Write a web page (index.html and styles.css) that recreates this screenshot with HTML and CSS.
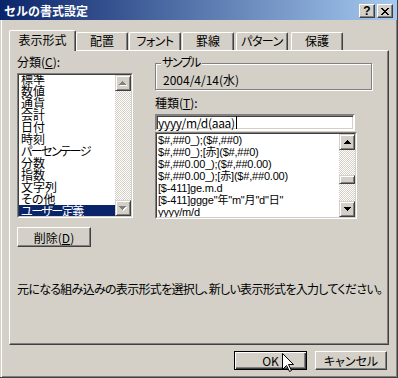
FILE: index.html
```html
<!DOCTYPE html>
<html lang="ja">
<head>
    <meta charset="UTF-8">
    <title>セルの書式設定</title>
    <link rel="stylesheet" href="styles.css">
</head>
<body>
    <div class="window">
        <div class="titlebar">
            <span class="title">セルの書式設定</span>
            <div class="caption-buttons">
                <span class="cap-btn help">?</span>
                <span class="cap-btn close">
                    <svg width="8" height="7" viewBox="0 0 8 7"><path d="M0 0h2v1H0zM6 0h2v1H6zM1 1h2v1H1zM5 1h2v1H5zM2 2h4v1H2zM3 3h2v1H3zM2 4h4v1H2zM1 5h2v1H1zM5 5h2v1H5zM0 6h2v1H0zM6 6h2v1H6z" fill="#000"/></svg>
                </span>
            </div>
        </div>

        <div class="client">
            <div class="tabs">
                <div class="tab active">表示形式</div>
                <div class="tab t-align">配置</div>
                <div class="tab t-font narrow">フォント</div>
                <div class="tab t-border">罫線</div>
                <div class="tab t-pattern narrow">パターン</div>
                <div class="tab t-protect">保護</div>
            </div>

            <div class="panel">
                <div class="columns">
                    <div class="col-left">
                        <div class="field-label">分類(<u>C</u>):</div>
                        <div class="listbox category-list">
                            <div class="listbox-inner">
                                <div class="list-items">
                                    <div class="item">標準</div>
                                    <div class="item">数値</div>
                                    <div class="item">通貨</div>
                                    <div class="item">会計</div>
                                    <div class="item">日付</div>
                                    <div class="item">時刻</div>
                                    <div class="item narrow">パーセンテージ</div>
                                    <div class="item">分数</div>
                                    <div class="item">指数</div>
                                    <div class="item">文字列</div>
                                    <div class="item">その他</div>
                                    <div class="item selected narrow">ユーザー定義</div>
                                </div>
                                <div class="scrollbar">
                                    <div class="scroll-btn">
                                        <svg width="8" height="5" viewBox="0 0 8 5"><path d="M4 1h1v1H4zM3 2h3v1H3zM2 3h5v1H2zM1 4h7v1H1z" fill="#fff"/><path d="M3 0h1v1H3zM2 1h3v1H2zM1 2h5v1H1zM0 3h7v1H0z" fill="#808080"/></svg>
                                    </div>
                                    <div class="scroll-track"></div>
                                    <div class="scroll-btn">
                                        <svg width="8" height="5" viewBox="0 0 8 5"><path d="M1 1h7v1H1zM2 2h5v1H2zM3 3h3v1H3zM4 4h1v1H4z" fill="#fff"/><path d="M0 0h7v1H0zM1 1h5v1H1zM2 2h3v1H2zM3 3h1v1H3z" fill="#808080"/></svg>
                                    </div>
                                </div>
                            </div>
                        </div>
                        <button class="btn delete">削除(<u>D</u>)</button>
                    </div>

                    <div class="col-right">
                        <div class="group">
                            <span class="group-label narrow">サンプル</span>
                            <div class="sample-value">2004/4/14(水)</div>
                        </div>
                        <div class="field-label">種類(<u>T</u>):</div>
                        <div class="textbox">yyyy/m/d(aaa)<span class="caret"></span></div>
                        <div class="listbox format-list">
                            <div class="listbox-inner">
                                <div class="list-items">
                                    <div class="item">$#,##0_);($#,##0)</div>
                                    <div class="item">$#,##0_);[赤]($#,##0)</div>
                                    <div class="item">$#,##0.00_);($#,##0.00)</div>
                                    <div class="item">$#,##0.00_);[赤]($#,##0.00)</div>
                                    <div class="item">[$-411]ge.m.d</div>
                                    <div class="item">[$-411]ggge"年"m"月"d"日"</div>
                                    <div class="item">yyyy/m/d</div>
                                </div>
                                <div class="scrollbar">
                                    <div class="scroll-btn">
                                        <svg width="7" height="4" viewBox="0 0 7 4"><path d="M3 0h1v1H3zM2 1h3v1H2zM1 2h5v1H1zM0 3h7v1H0z" fill="#000"/></svg>
                                    </div>
                                    <div class="scroll-track">
                                        <div class="thumb"></div>
                                    </div>
                                    <div class="scroll-btn">
                                        <svg width="7" height="4" viewBox="0 0 7 4"><path d="M0 0h7v1H0zM1 1h5v1H1zM2 2h3v1H2zM3 3h1v1H3z" fill="#000"/></svg>
                                    </div>
                                </div>
                            </div>
                        </div>
                    </div>
                </div>

                <p class="hint">元になる組み込みの表示形式を選択し、新しい表示形式を入力してください。</p>
            </div>

            <div class="actions">
                <button class="btn ok default">OK</button>
                <button class="btn cancel">キャンセル</button>
            </div>
        </div>

        <!-- mouse pointer resting on the OK button -->
        <svg class="cursor" width="13" height="20" viewBox="0 0 13 20">
            <path d="M0.5 0.5V16.5L4.5 12.5L7.5 18.5L9.5 17.5L6.5 11.5H11.5Z" fill="#fff" stroke="#000" stroke-width="1" stroke-linejoin="miter"/>
        </svg>
    </div>
</body>
</html>
```

FILE: styles.css
```css
* {
    margin: 0;
    padding: 0;
    box-sizing: border-box;
}

body {
    width: 398px;
    height: 378px;
    overflow: hidden;
    background: #d4d0c8;
    font-family: "Noto Sans CJK JP", sans-serif;
    font-size: 12px;
    font-feature-settings: "palt";
    color: #000;
}

u {
    text-decoration: underline;
    text-underline-offset: 1px;
}

.narrow {
    letter-spacing: -1.5px;
}

.window {
    position: relative;
    width: 398px;
    height: 378px;
    background: #d4d0c8;
    border-right: 1px solid #404040;
    border-bottom: 1px solid #404040;
    box-shadow: inset 1px 1px #d4d0c8, inset 2px 2px #fff, inset -1px -1px #808080;
    overflow: hidden;
}

/* title bar */
.titlebar {
    display: flex;
    justify-content: space-between;
    align-items: flex-start;
    height: 20px;
    padding: 0 4px 0 4px;
    background: linear-gradient(to right, #0a246a, #a6caf0);
}

.title {
    color: #fff;
    font-weight: bold;
    font-feature-settings: normal;
    line-height: 16px;
    padding-top: 3px;
}

.caption-buttons {
    display: flex;
    gap: 2px;
    padding-top: 4px;
}

.cap-btn {
    display: flex;
    align-items: center;
    justify-content: center;
    width: 16px;
    height: 14px;
    background: #d4d0c8;
    border: 1px solid;
    border-color: #fff #404040 #404040 #fff;
    box-shadow: inset -1px -1px #808080;
}

.cap-btn.help {
    font-family: "Liberation Sans", sans-serif;
    font-weight: bold;
    font-size: 12px;
    line-height: 12px;
}

/* tabs */
.client {
    padding: 10px 8px 0 9px;
}

.tabs {
    display: flex;
    align-items: flex-end;
    height: 20px;
}

.tab {
    height: 18px;
    width: 52px;
    border-top: 1px solid #fff;
    border-left: 1px solid #fff;
    border-right: 1px solid #404040;
    border-radius: 2px 2px 0 0;
    box-shadow: inset -1px 0 #808080;
    text-align: center;
    line-height: 16px;
    white-space: nowrap;
}

.tab.narrow {
    letter-spacing: -0.5px;
}

.tab.active {
    position: relative;
    z-index: 1;
    width: 67px;
    height: 21px;
    margin-bottom: -1px;
    background: #d4d0c8;
    line-height: 18px;
}

.t-font,
.t-border {
    margin-left: 1px;
}

.t-pattern {
    margin-left: 2px;
}

.t-protect {
    margin-left: 3px;
}

.panel {
    width: 380px;
    height: 295px;
    padding: 4px 0 0 7px;
    border-top: 1px solid #fff;
    border-left: 1px solid #fff;
    border-right: 1px solid #404040;
    border-bottom: 1px solid #404040;
    box-shadow: inset -1px -1px #808080;
}

.columns {
    display: flex;
    gap: 22px;
}

.col-left {
    width: 116px;
}

.col-right {
    width: 217px;
}

.field-label {
    height: 18px;
    line-height: 14px;
}

/* list boxes */
.listbox {
    border: 1px solid;
    border-color: #808080 #fff #fff #808080;
}

.listbox-inner {
    display: flex;
    height: 100%;
    border: 1px solid;
    border-color: #404040 #d4d0c8 #d4d0c8 #404040;
    background: #fff;
    overflow: hidden;
}

.list-items {
    flex: 1;
    overflow: hidden;
}

.item {
    height: 12px;
    line-height: 12px;
    white-space: nowrap;
}

.category-list {
    width: 116px;
    height: 145px;
}

.category-list .list-items {
    margin-top: -2px;
}

.category-list .item {
    padding-left: 2px;
}

.item.selected {
    background: #0a246a;
    color: #fff;
}

.format-list {
    width: 202px;
    height: 87px;
    margin-top: 1px;
}

.format-list .item {
    padding-left: 1px;
    font-family: "Liberation Sans", "Noto Sans CJK JP", sans-serif;
    font-size: 11px;
    letter-spacing: -0.2px;
}

.scrollbar {
    display: flex;
    flex-direction: column;
    width: 16px;
}

.scroll-btn {
    display: flex;
    align-items: center;
    justify-content: center;
    width: 16px;
    height: 16px;
    background: #d4d0c8;
    border: 1px solid;
    border-color: #d4d0c8 #404040 #404040 #d4d0c8;
    box-shadow: inset 1px 1px #fff, inset -1px -1px #808080;
}

.scroll-track {
    flex: 1;
    background: repeating-conic-gradient(#fff 0 25%, #d4d0c8 0 50%) 0 0 / 2px 2px;
}

.thumb {
    width: 16px;
    height: 9px;
    margin-top: 25px;
    background: #d4d0c8;
    border: 1px solid;
    border-color: #d4d0c8 #404040 #404040 #d4d0c8;
    box-shadow: inset 1px 1px #fff, inset -1px -1px #808080;
}

/* sample group */
.group {
    position: relative;
    height: 27px;
    margin-top: 8px;
    margin-bottom: 6px;
    border: 1px solid #808080;
    box-shadow: inset 1px 1px #fff, 1px 1px #fff;
}

.group-label {
    position: absolute;
    top: -9px;
    left: 5px;
    padding: 0 2px 0 1px;
    background: #d4d0c8;
    line-height: 14px;
}

.sample-value {
    padding-left: 7px;
    margin-top: 9px;
    line-height: 14px;
}

.textbox {
    width: 200px;
    height: 17px;
    padding-left: 1px;
    border: 2px solid;
    border-color: #808080 #fff #fff #808080;
    box-shadow: inset 1px 1px #404040, inset -1px -1px #d4d0c8;
    background: #fff;
    line-height: 13px;
    white-space: nowrap;
    letter-spacing: -0.3px;
}

.caret {
    display: inline-block;
    width: 1px;
    height: 13px;
    margin-left: 1px;
    vertical-align: top;
    background: #000;
}

/* buttons */
.btn {
    display: block;
    height: 19px;
    background: #d4d0c8;
    border: 1px solid;
    border-color: #fff #404040 #404040 #fff;
    box-shadow: inset -1px -1px #808080;
    font: inherit;
    line-height: 15px;
    text-align: center;
    color: #000;
}

.btn.delete {
    width: 74px;
    height: 20px;
    margin-top: 9px;
}

.btn.default {
    border-color: #000;
    box-shadow: inset 1px 1px #fff, inset -1px -1px #404040, inset -2px -2px #808080;
}

.btn.ok {
    width: 73px;
}

.btn.cancel {
    width: 72px;
}

.hint {
    margin-top: 35px;
    line-height: 14px;
    white-space: nowrap;
    letter-spacing: -0.7px;
}

.actions {
    display: flex;
    justify-content: flex-end;
    gap: 8px;
    margin-top: 6px;
    padding-right: 2px;
}

.cursor {
    position: absolute;
    left: 282px;
    top: 353px;
}
```
